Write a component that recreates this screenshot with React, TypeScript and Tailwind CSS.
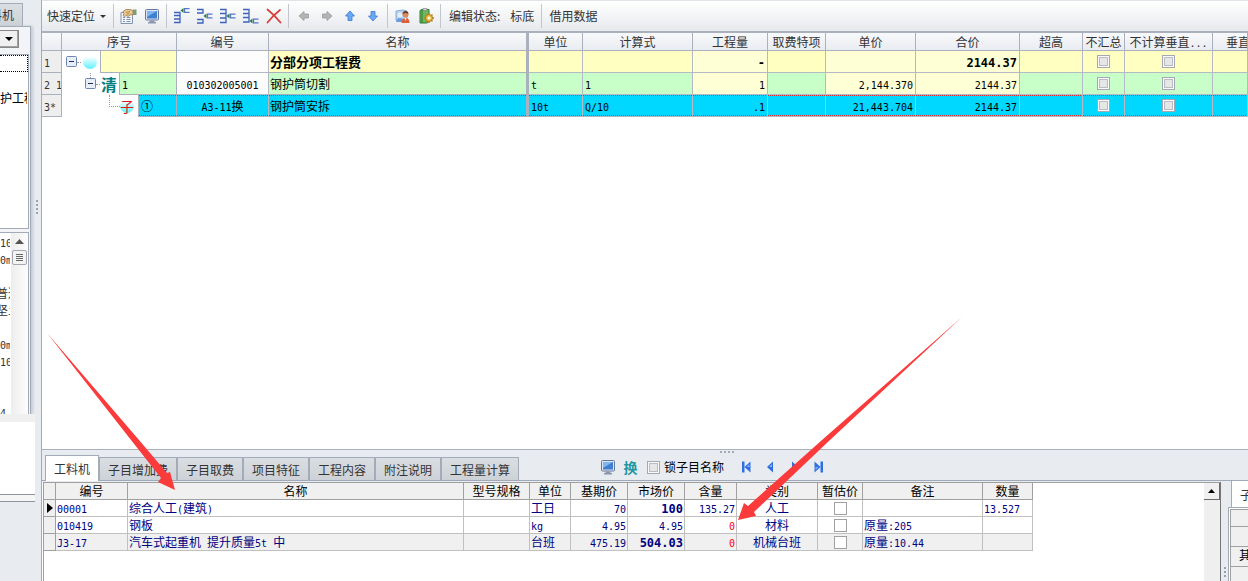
import type { ReactNode } from 'react'
import clsx from 'clsx'

interface GridRow {
  no: string
  seq: string
  code: string
  name: string
  unit: string
  formula: string
  qty: string
  price: string
  total: string
}

interface Resource {
  code: string
  name: string
  unit: string
  base: string
  market: string
  marketBold: boolean
  amount: string
  kind: string
  note: string
  count: string
}

const gridRows: GridRow[] = [
  { no: '1', seq: '', code: '', name: '分部分项工程费', unit: '', formula: '', qty: '-', price: '', total: '2144.37' },
  { no: '2 1', seq: '1', code: '010302005001', name: '钢护筒切割', unit: 't', formula: '1', qty: '1', price: '2,144.370', total: '2144.37' },
  { no: '3*', seq: '①', code: 'A3-11换', name: '钢护筒安拆', unit: '10t', formula: 'Q/10', qty: '.1', price: '21,443.704', total: '2144.37' },
]

const resources: Resource[] = [
  { code: '00001', name: '综合人工(建筑)', unit: '工日', base: '70', market: '100', marketBold: true, amount: '135.27', kind: '人工', note: '', count: '13.527' },
  { code: '010419', name: '钢板', unit: 'kg', base: '4.95', market: '4.95', marketBold: false, amount: '0', kind: '材料', note: '原量:205', count: '' },
  { code: 'J3-17', name: '汽车式起重机 提升质量5t 中', unit: '台班', base: '475.19', market: '504.03', marketBold: true, amount: '0', kind: '机械台班', note: '原量:10.44', count: '' },
]

const gridHeaders = ['', '序号', '编号', '名称', '单位', '计算式', '工程量', '取费特项', '单价', '合价', '超高', '不汇总', '不计算垂直...', '垂直']
const gridCols = ['w-[20px]', 'w-[115px]', 'w-[92px]', 'w-[260px]', 'w-[54px]', 'w-[110px]', 'w-[75px]', 'w-[58px]', 'w-[90px]', 'w-[104px]', 'w-[63px]', 'w-[42px]', 'w-[88px]', '']

const resourceHeaders = ['', '编号', '名称', '型号规格', '单位', '基期价', '市场价', '含量', '类别', '暂估价', '备注', '数量']
const resourceCols = ['w-[12px]', 'w-[72px]', 'w-[336px]', 'w-[66px]', 'w-[41px]', 'w-[57px]', 'w-[57px]', 'w-[52px]', 'w-[81px]', 'w-[45px]', 'w-[120px]', 'w-[50px]']

const tabs = ['工料机', '子目增加费', '子目取费', '项目特征', '工程内容', '附注说明', '工程量计算']

const sideLines = ['10', '0m', '', '普通', '坚土', '', '0m', '10', '', '', '4']

// Latin runs get the half-width face, everything else stays in the CJK one
function Mixed({ text, bold = false }: { text: string; bold?: boolean }) {
  return (
    <span className={clsx('whitespace-pre', bold && 'font-bold')}>
      {text.split(/([\x20-\x7e]+)/).filter(Boolean).map((part, i) =>
        /^[\x20-\x7e]/.test(part) ? (
          <span key={i} className={clsx('font-["DejaVu_Sans_Mono",monospace]', bold ? 'text-[12px]/[12px]' : 'text-[10px]/[10px]')}>{part}</span>
        ) : (
          <span key={i}>{part}</span>
        )
      )}
    </span>
  )
}

function Separator() {
  return <div className="mx-[3px] h-6 w-px bg-[#c3c7cd]" />
}

function ToolButton({ label, children }: { label: string; children: ReactNode }) {
  return (
    <button type="button" aria-label={label} className="flex h-6 w-[23px] items-center justify-center">
      {children}
    </button>
  )
}

function MonitorIcon() {
  return (
    <svg width="16" height="16" viewBox="0 0 16 16">
      <rect x="1.5" y="1.5" width="13" height="10.500" rx="1" fill="#dfe6f0" stroke="#66799c" />
      <rect x="3" y="3" width="10" height="7.500" fill="#3f7fd0" />
      <path d="M3 3h10L3 9z" fill="#7fb6f2" />
      <path d="M5.500 12.500h5V14h1.500v1.500H4V14h1.500z" fill="#8c96ab" />
    </svg>
  )
}

function PropertiesIcon() {
  return (
    <svg width="17" height="16" viewBox="0 0 17 16">
      <path d="M1 4.500h11.500v11H1z" fill="#f3f5f8" stroke="#8494ad" />
      <path d="M3 9.500h2M3 11.500h2M3 13.500h2M6.500 9.500h4M6.500 11.500h4M6.500 13.500h4" stroke="#7c92b5" />
      <path d="M3 3.500l3-2h4l3 1v4l-3 .5-2 1.500-1.500-1L4.500 8.500 3 7.500l1-2z" fill="#edc98f" stroke="#9b7648" strokeWidth=".8" />
      <path d="M13 1.500h3.500v5.500H13z" fill="#7b9c74" />
      <path d="M6 4.500l4-1M6.500 6.500l3-1" stroke="#9b7648" strokeWidth=".8" />
    </svg>
  )
}

// Stacked row brackets with the inserted row hanging off at its own height
function InsertIcon({ slot }: { slot: 'top' | 'split' | 'middle' | 'bottom' }) {
  const y = { top: 2.5, split: 8, middle: 8, bottom: 13 }[slot]
  const stack = {
    top: 'M1 4.500h6v3H1M7 7.500v3.500H1M1 14.500h6V11',
    split: 'M1 1.500h6v3.500H1M1 11.500h6v3.500H1',
    middle: 'M1 1.500h6v4H1M1 10h6V5.500M1 14.500h6V10',
    bottom: 'M1 1.500h6v4H1M1 9.500h6v-4M1 14h6V9.500',
  }[slot]
  return (
    <svg width="17" height="17" viewBox="0 0 17 17" fill="none">
      <path d={stack} stroke="#3f62bd" strokeWidth="1.300" />
      <path d={`M10.500 ${y - 2.5}v5l-3-2.500z`} fill="#2f7d3c" />
      <path d={`M16.500 ${y - 1.8}h-5v3.600h5`} stroke="#5677c8" strokeWidth="1.300" />
    </svg>
  )
}

function ArrowIcon({ turn, tone }: { turn: number; tone: 'gray' | 'blue' }) {
  return (
    <svg width="12" height="12" viewBox="0 0 12 12">
      <path
        d="M1 6l5-4.500V4h4.500v4H6v2.500z"
        transform={`rotate(${turn} 6 6)`}
        fill={tone === 'gray' ? '#b5b5b5' : '#6aaaf4'}
        stroke={tone === 'gray' ? '#9a9a9a' : '#3b78cf'}
        strokeWidth=".8"
      />
    </svg>
  )
}

function UsersIcon() {
  return (
    <svg width="15" height="15" viewBox="0 0 15 15">
      <path d="M1 2l7-1 4 1v9l-4 1-7-1z" fill="#b9d5f2" stroke="#7aa0cc" strokeWidth=".8" />
      <circle cx="5" cy="6" r="2.500" fill="#e6eefb" />
      <path d="M1 13c0-3 2-4 4-4s4 1 4 4z" fill="#6c9be0" />
      <circle cx="10.500" cy="5.500" r="3" fill="#d98c5a" />
      <path d="M7.500 5c0-4 6-4 6 0-2-1.500-4-1.500-6 0z" fill="#6b3a22" />
      <path d="M6.500 14c0-4 2-5 4-5s4 1 4 5z" fill="#d9603a" />
      <path d="M9.500 9h2l-1 3z" fill="#fff" />
    </svg>
  )
}

function GearBookIcon() {
  return (
    <svg width="16" height="16" viewBox="0 0 16 16">
      <path d="M2 2.500l2-1h7v12l-2 1.500H2z" fill="#6cb95c" stroke="#2f7a35" />
      <path d="M4 1v14" stroke="#2f7a35" />
      <path d="M5 .5h4v2H5z" fill="#d8d8d8" stroke="#777" strokeWidth=".6" />
      <circle cx="11" cy="10" r="3.500" fill="#f0c04c" stroke="#a87820" />
      <path d="M11 5v2M11 13v2M6 10h2M14 10h2M7.500 6.500l1.400 1.400M13.100 12.100l1.400 1.400M7.500 13.500l1.400-1.400M13.100 7.900l1.400-1.400" stroke="#b98420" strokeWidth="1.4" />
      <circle cx="11" cy="10" r="1.300" fill="#fff" />
    </svg>
  )
}

function Toolbar() {
  return (
    <div className="flex h-[33px] shrink-0 items-center border-t border-b-2 border-t-[#dfe2e6] border-b-[#aab1bd] bg-linear-to-b from-white to-[#e6e9ed] pl-[5px] text-[#333]">
      <button type="button" className="flex items-center gap-[5px] pr-1 text-[12px]">
        快速定位
        <svg width="6" height="3" viewBox="0 0 6 3"><path d="M0 0h6L3 3z" fill="#333" /></svg>
      </button>
      <Separator />
      <ToolButton label="属性"><PropertiesIcon /></ToolButton>
      <ToolButton label="显示"><MonitorIcon /></ToolButton>
      <Separator />
      <ToolButton label="插入"><InsertIcon slot="top" /></ToolButton>
      <ToolButton label="插入同级"><InsertIcon slot="split" /></ToolButton>
      <ToolButton label="插入子级"><InsertIcon slot="middle" /></ToolButton>
      <ToolButton label="追加"><InsertIcon slot="bottom" /></ToolButton>
      <ToolButton label="删除">
        <svg width="16" height="16" viewBox="0 0 16 16" fill="none" stroke="#d6403c" strokeLinecap="round">
          <path d="M1.500 1.500c5 4 9 8 13 13" strokeWidth="1.8" />
          <path d="M14 2C9 6 5 10 1.500 14.500" strokeWidth="1.8" />
        </svg>
      </ToolButton>
      <Separator />
      <ToolButton label="左移"><ArrowIcon turn={0} tone="gray" /></ToolButton>
      <ToolButton label="右移"><ArrowIcon turn={180} tone="gray" /></ToolButton>
      <ToolButton label="上移"><ArrowIcon turn={90} tone="blue" /></ToolButton>
      <ToolButton label="下移"><ArrowIcon turn={270} tone="blue" /></ToolButton>
      <Separator />
      <ToolButton label="人员"><UsersIcon /></ToolButton>
      <ToolButton label="设置"><GearBookIcon /></ToolButton>
      <Separator />
      <span className="pl-[5px] text-[12px]">编辑状态:</span>
      <button type="button" className="ml-[10px] pr-1 text-[12px]">标底</button>
      <Separator />
      <button type="button" className="pl-1 text-[12px]">借用数据</button>
    </div>
  )
}

function Collapse({ stem = false }: { stem?: boolean }) {
  return (
    <svg width="11" height="22" viewBox="0 0 11 22">
      {stem && <path d="M5.500 0v6" stroke="#999" strokeDasharray="1 1" />}
      <rect x=".5" y="5.500" width="10" height="10" rx="1" fill="#e8eef8" stroke="#6f86b0" />
      <path d="M3 10.500h5" stroke="#1f2f55" />
    </svg>
  )
}

function Ball() {
  return (
    <svg width="14" height="14" viewBox="0 0 14 14" className="shrink-0">
      <defs>
        <linearGradient id="ball" x1="0" y1="0" x2="0" y2="1">
          <stop offset="0.1" stopColor="#fff" />
          <stop offset="1" stopColor="#5ff0ff" />
        </linearGradient>
      </defs>
      <circle cx="7" cy="7" r="7" fill="url(#ball)" />
    </svg>
  )
}

function TreeCell({ index }: { index: number }) {
  if (index === 0) {
    return (
      <div className="flex w-[38px] shrink-0 items-center pl-1">
        <Collapse />
        <span className="w-1 border-t border-dotted border-[#999]" />
        <span className="ml-[2px]"><Ball /></span>
      </div>
    )
  }
  if (index === 1) {
    return (
      <div className="flex w-[57px] shrink-0 items-center pl-[23px]">
        <Collapse stem />
        <span className="w-1 border-t border-dotted border-[#999]" />
        <span className="ml-px text-[16px] leading-none font-bold text-[#008080]">清</span>
      </div>
    )
  }
  return (
    <div className="flex w-[76px] shrink-0 items-center pl-[47px]">
      <span className="mb-[10px] h-3 w-[11px] border-b border-l border-dotted border-[#999]" />
      <span className="relative flex size-[14px] items-center justify-center">
        <Ball />
        <span className="absolute text-[14px] leading-none text-[#e01818]">子</span>
      </span>
    </div>
  )
}

function GridCheck({ label }: { label: string }) {
  return (
    <input
      type="checkbox"
      aria-label={label}
      className="block size-[13px] appearance-none border border-[#a3a8b2] bg-[#e6e6e6] shadow-[inset_0_0_0_1px_#fafafa,inset_0_0_0_2px_#b9bcc2]"
    />
  )
}

const YELLOW = 'bg-[#ffffc1]'
const PALE = 'bg-[#ffffd6]'
const GREEN = 'bg-[#c8ffc8]'
const CYAN = 'bg-[#00d8ff]'

// Focus marks of the current row: one dot every other pixel, top and bottom
const DOTS =
  'bg-[linear-gradient(90deg,#c8383c_50%,transparent_50%),linear-gradient(90deg,#c8383c_50%,transparent_50%)] bg-[length:2px_1px] bg-[position:0_0,0_100%] bg-repeat-x'

function BudgetGrid() {
  return (
    <div className="min-h-0 flex-1 overflow-hidden border-b border-[#aab1bd] bg-white">
      <table className="w-full table-fixed border-separate border-spacing-0">
        <colgroup>
          {gridCols.map((c, i) => <col key={i} className={c} />)}
        </colgroup>
        <thead>
          <tr>
            {gridHeaders.map((h, i) => (
              <th
                key={i}
                className={clsx(
                  'h-[18px] overflow-hidden border-b border-[#aab1bd] bg-linear-to-b from-[#f8f9fb] to-[#e9ecf1] p-0 text-[12px] leading-[17px] font-normal whitespace-nowrap text-[#333]',
                  i === 3 ? 'border-r-3' : 'border-r',
                  i === 13 && 'pl-[13px] text-left'
                )}
              >
                <Mixed text={h} />
              </th>
            ))}
          </tr>
        </thead>
        <tbody>
          {gridRows.map((row, r) => {
            const base = [YELLOW, GREEN, CYAN][r]
            const money = r === 2 ? CYAN : PALE
            const cells: { body: ReactNode; bg: string; cls?: string }[] = [
              { body: <Mixed text={row.code} />, bg: r === 2 ? CYAN : 'bg-[#fdfdfd]', cls: 'justify-center' },
              { body: r === 0 ? <span className="text-[13px] font-bold">{row.name}</span> : row.name, bg: base, cls: 'pl-px' },
              { body: <Mixed text={row.unit} />, bg: base, cls: 'pl-[2px]' },
              { body: <Mixed text={row.formula} />, bg: base, cls: 'pl-[2px]' },
              { body: <Mixed text={row.qty} bold={r === 0} />, bg: money, cls: 'justify-end pr-[2px]' },
              { body: '', bg: base },
              { body: <Mixed text={row.price} />, bg: money, cls: 'justify-end pr-[2px]' },
              { body: <Mixed text={row.total} bold={r === 0} />, bg: money, cls: 'justify-end pr-[2px]' },
              { body: '', bg: base },
              { body: <GridCheck label={`不汇总 ${row.no}`} />, bg: base, cls: 'justify-center' },
              { body: <GridCheck label={`不计算垂直 ${row.no}`} />, bg: base, cls: 'justify-center' },
              { body: '', bg: base },
            ]
            const edge = r === 2 && DOTS
            return (
              <tr key={row.no} className="text-[12px] leading-[20px] text-black">
                <td className="h-[22px] overflow-hidden border-r border-b border-[#aab1bd] bg-[#eeeeee] p-0 pl-[2px] whitespace-nowrap text-[#333]">
                  <Mixed text={row.no} />
                </td>
                <td className="h-[22px] border-r border-[#aab1bd] bg-white p-0">
                  <div className="flex h-[22px]">
                    <TreeCell index={r} />
                    <div className={clsx('flex-1 border-b border-l border-[#aab1bd]', base)}>
                      <div className={clsx('flex h-[21px] items-center pl-[2px]', edge)}>
                        <Mixed text={row.seq} />
                      </div>
                    </div>
                  </div>
                </td>
                {cells.map((c, i) => (
                  <td
                    key={i}
                    className={clsx(
                      'h-[22px] border-b p-0',
                      i === 1 ? 'border-r-3 border-[#aab1bd]' : 'border-r border-[#b4b9c4]',
                      c.bg
                    )}
                  >
                    <div className={clsx('flex h-[21px] items-center', edge, c.cls)}>{c.body}</div>
                  </td>
                ))}
              </tr>
            )
          })}
        </tbody>
      </table>
    </div>
  )
}

function NavIcon({ back, bar }: { back: boolean; bar: boolean }) {
  return (
    <svg width="11" height="12" viewBox="0 0 11 12" className={back ? '' : 'rotate-180'}>
      {bar && <path d="M1 .5h2.500v11H1z" fill="#2f6fe0" />}
      <path d={bar ? 'M3.500 6l6-5.500v11z' : 'M2 6l6-5.500v11z'} fill="#2f6fe0" />
      <path d={bar ? 'M5.500 6l3-3V6z' : 'M4 6l3-3V6z'} fill="#7fb0ff" />
    </svg>
  )
}

function TabBar() {
  return (
    <div className="relative flex h-[31px] shrink-0 items-end border-b border-[#9fa9b8] bg-[#e8ecf1] pl-[3px]">
      <div className="absolute top-px left-[678px] flex gap-[2px]">
        {[0, 1, 2, 3].map((i) => <span key={i} className="size-[2px] bg-[#a4abb5]" />)}
      </div>
      {tabs.map((t, i) => (
        <button
          key={t}
          type="button"
          className={clsx(
            'shrink-0 border-t border-r border-l border-[#a3abb8] px-2 pt-px text-[12px] text-[#333]',
            i === 0 ? '-mb-px h-[26px] bg-white' : 'h-[23px] bg-linear-to-b from-[#dadee3] to-[#cdd2d8]'
          )}
        >
          {t}
        </button>
      ))}
      <div className="ml-[77px] flex items-center pb-px">
        <ToolButton label="显示"><MonitorIcon /></ToolButton>
        <button type="button" className="h-6 w-[23px] text-[14px] leading-6 font-bold text-[#1f96a0]">换</button>
        <label className="ml-[5px] flex items-center gap-1 text-[12px] text-black">
          <GridCheck label="锁子目名称" />
          锁子目名称
        </label>
        <div className="ml-[11px] flex gap-px">
          <ToolButton label="第一条"><NavIcon back bar /></ToolButton>
          <ToolButton label="上一条"><NavIcon back bar={false} /></ToolButton>
          <ToolButton label="下一条"><NavIcon back={false} bar={false} /></ToolButton>
          <ToolButton label="最后一条"><NavIcon back={false} bar /></ToolButton>
        </div>
      </div>
    </div>
  )
}

function ResourceTable() {
  const td = 'h-[17px] overflow-hidden border-r border-b border-[#c0c0c0] p-0 px-px whitespace-nowrap'
  return (
    <table className="w-[989px] table-fixed border-separate border-spacing-0">
      <colgroup>
        {resourceCols.map((c, i) => <col key={i} className={c} />)}
      </colgroup>
      <thead>
        <tr>
          {resourceHeaders.map((h, i) => (
            <th
              key={i}
              className="h-[17px] border-r border-b border-[#a0a0a0] bg-[#f0f0f0] p-0 text-[12px] leading-[16px] font-normal whitespace-nowrap text-black"
            >
              {h}
            </th>
          ))}
        </tr>
      </thead>
      <tbody>
        {resources.map((row, r) => (
          <tr key={row.code} className={clsx('text-[12px] leading-[16px] text-[#000080]', r === 2 && 'bg-[#f0f0f0]')}>
            <td className="h-[17px] border-r border-b border-[#a0a0a0] bg-[#f0f0f0] p-0">
              {r === 0 && (
                <svg width="6" height="10" viewBox="0 0 6 10" className="ml-[3px]"><path d="M0 0l6 5-6 5z" fill="#000" /></svg>
              )}
            </td>
            <td className={td}><Mixed text={row.code} /></td>
            <td className={td}><Mixed text={row.name} /></td>
            <td className={td} />
            <td className={td}><Mixed text={row.unit} /></td>
            <td className={clsx(td, 'text-right')}><Mixed text={row.base} /></td>
            <td className={clsx(td, 'text-right')}><Mixed text={row.market} bold={row.marketBold} /></td>
            <td className={clsx(td, 'text-right', r > 0 && 'text-[#ff0000]')}><Mixed text={row.amount} /></td>
            <td className={clsx(td, 'text-center')}>{row.kind}</td>
            <td className={td}>
              <input
                type="checkbox"
                aria-label={`暂估价 ${row.code}`}
                className="mx-auto block size-[13px] appearance-none border border-[#a0a0a0] bg-white"
              />
            </td>
            <td className={td}><Mixed text={row.note} /></td>
            <td className={td}><Mixed text={row.count} /></td>
          </tr>
        ))}
      </tbody>
    </table>
  )
}

function DetailPanel() {
  return (
    <div className="flex h-[100px] shrink-0 bg-[#e8ecf1]">
      <div className="mt-px flex min-w-0 flex-1 border-r border-[#777] bg-white pl-px">
        <div className="min-w-0 flex-1 overflow-hidden border-t border-l border-[#a0a0a0]">
          <ResourceTable />
        </div>
        <div className="flex w-4 shrink-0 flex-col border-t border-[#a0a0a0] bg-[#efefef]">
          <button
            type="button"
            aria-label="向上滚动"
            className="flex h-[17px] items-center justify-center border-r border-b border-r-[#696969] border-b-[#696969] bg-[#f0f0f0]"
          >
            <svg width="7" height="4" viewBox="0 0 7 4"><path d="M3.500 0L7 4H0z" fill="#000" /></svg>
          </button>
        </div>
      </div>
      <div className="flex w-[7px] shrink-0 flex-col items-center justify-end gap-[2px] pb-1">
        {[0, 1, 2].map((i) => <span key={i} className="size-[2px] bg-[#9aa2b0]" />)}
      </div>
      <div className="flex w-5 shrink-0 flex-col overflow-hidden">
        <button
          type="button"
          className="ml-[3px] h-[26px] shrink-0 border-l border-[#a3abb8] bg-white pt-px pl-2 text-left text-[12px] text-[#333]"
        >
          子
        </button>
        <div className="flex-1 border-t border-l border-[#a3abb8] bg-white pt-px pl-px">
          <div className="border-t border-l border-[#a0a0a0] bg-[#f0f0f0] text-[12px] leading-[19px] text-black">
            <div className="h-[17px] border-b border-[#a0a0a0]" />
            <div className="h-5 border-b border-[#a0a0a0]" />
            <div className="h-5 border-b border-[#a0a0a0] pl-2 leading-[16px]">其</div>
            <div className="h-5" />
          </div>
        </div>
      </div>
    </div>
  )
}

function SidePane() {
  return (
    <aside className="flex w-[35px] shrink-0 flex-col overflow-hidden bg-[#e8ecf1] text-[12px] text-[#333]">
      <button
        type="button"
        className="mt-[3px] flex h-[23px] w-[23px] shrink-0 items-center justify-end overflow-hidden border-t border-r border-[#a3abb8] bg-linear-to-b from-[#dadee3] to-[#cdd2d8] pr-2 whitespace-nowrap"
      >
        料机
      </button>
      <div className="flex h-[388px] w-[31px] shrink-0 flex-col border-t border-r border-[#a3abb8] bg-[#f2f4f7] shadow-[2px_0_3px_#c3c9d2]">
        <button
          type="button"
          aria-label="展开"
          className="mt-[3px] flex h-[18px] w-[19px] shrink-0 items-center justify-end border border-l-0 border-[#888] bg-[#f0f0f0] pr-[5px] shadow-[inset_-1px_-1px_0_#a0a0a0]"
        >
          <svg width="8" height="4" viewBox="0 0 8 4"><path d="M0 0h8L4 4z" fill="#000" /></svg>
        </button>
        <div className="mt-[6px] h-[175px] w-[29px] shrink-0 border-t border-r border-b border-[#a3abb8] bg-white">
          <div className="h-[17px] border border-l-0 border-dotted border-black" />
          <div className="mt-4 h-5 w-[27px] overflow-hidden leading-5 whitespace-nowrap text-black">护工程</div>
        </div>
        <div className="mt-[3px] flex min-h-0 w-[29px] flex-1 border-t border-r border-[#a3abb8] bg-white">
          <div className="w-[10px] overflow-hidden leading-[17px] whitespace-nowrap">
            {sideLines.map((s, i) => (
              <div key={i} className={clsx('h-[17px]', /^[^\x20-\x7e]/.test(s) && '-ml-1')}>
                <Mixed text={s} />
              </div>
            ))}
          </div>
          <div className="ml-px flex flex-1 flex-col items-center bg-linear-to-r from-[#ededed] to-[#fdfdfd] pt-[6px]">
            <svg width="9" height="5" viewBox="0 0 9 5"><path d="M4.500 0L9 5H0z" fill="#555" /></svg>
            <div className="mt-[6px] flex h-[15px] w-[15px] flex-col items-center justify-center gap-px rounded-xs border border-[#a3a8b2] bg-[#f3f3f3]">
              {[0, 1, 2, 3].map((i) => <span key={i} className="h-px w-[7px] bg-[#666]" />)}
            </div>
          </div>
        </div>
      </div>
      <div className="h-2 shrink-0 bg-[#f0f0f0]" />
      <div className="h-[73px] shrink-0 border-b border-[#8d929c] bg-white" />
      <div className="h-[7px] shrink-0 border-b border-[#8d929c] bg-[#f6f6f6]" />
    </aside>
  )
}

export default function App() {
  return (
    <div className='relative flex h-screen overflow-hidden bg-[#e8ecf1] font-["Noto_Sans_CJK_SC",sans-serif]'>
      <SidePane />
      <div className="flex w-[6px] shrink-0 flex-col items-center gap-[2px] pt-[200px] pr-[2px]">
        {[0, 1, 2, 3].map((i) => <span key={i} className="size-[2px] bg-[#9aa2b0]" />)}
      </div>
      <main className="flex min-w-0 flex-1 flex-col border-l border-[#a3abb8]">
        <Toolbar />
        <BudgetGrid />
        <TabBar />
        <DetailPanel />
      </main>

      {/* Red callout arrows */}
      <svg
        width="1248"
        height="581"
        viewBox="0 0 1248 581"
        fill="#fb3b3b"
        className="pointer-events-none absolute top-0 left-0 max-w-none"
      >
        <path d="M47 333L139 440L167 473L170 472L175 490L158 482L161 478L131 440Z" />
        <path d="M962 317L830 440L754 512L756 516L738 520L744 503L748 506L822 440Z" />
      </svg>
    </div>
  )
}
